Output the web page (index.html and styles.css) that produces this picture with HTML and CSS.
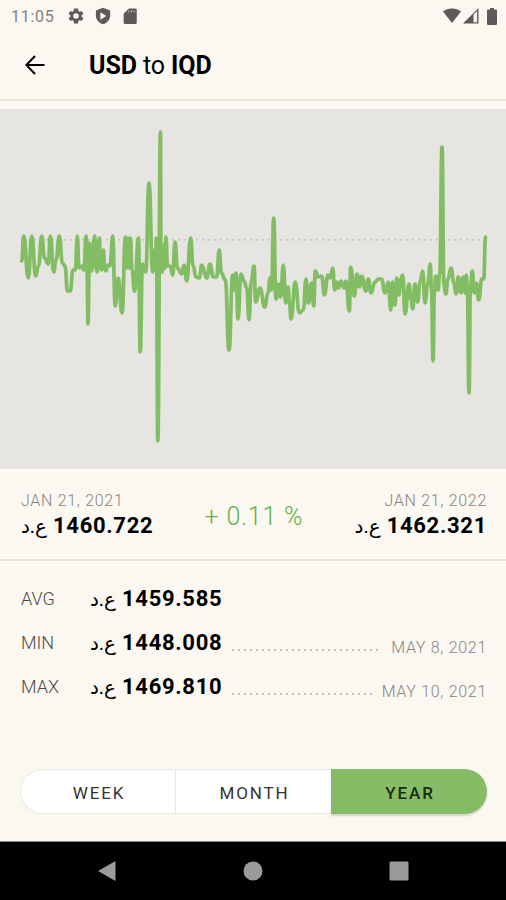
FILE: index.html
```html
<!DOCTYPE html>
<html lang="en">
<head>
    <meta charset="UTF-8">
    <meta name="viewport" content="width=device-width, initial-scale=1.0">
    <title>USD to IQD</title>
    <link rel="stylesheet" href="styles.css">
</head>
<body>
    <div class="status-bar">
        <span class="clock">11:05</span>
        <svg class="gear" width="18" height="18" viewBox="0 0 24 24"><path fill-rule="evenodd" d="M19.400 13a7.500 7.500 0 0 0 0-2l2.600-1.700-2.400-4.100-3 1.100a7.500 7.500 0 0 0-1.400-.9L14.800 2H9.200l-.4 3.400a7.500 7.500 0 0 0-1.400.9l-3-1.100L2 9.300 4.600 11a7.500 7.500 0 0 0 0 2L2 14.700l2.400 4.100 3-1.100a7.500 7.500 0 0 0 1.400.9l.4 3.400h5.600l.4-3.400a7.500 7.500 0 0 0 1.400-.9l3 1.100 2.400-4.100zM12 15.700a3.700 3.700 0 1 1 0-7.400 3.700 3.700 0 0 1 0 7.400z"/></svg>
        <svg class="shield" width="18" height="18" viewBox="0 0 24 24"><path fill-rule="evenodd" d="M12 1L2.500 4.500V11c0 6 4 10.500 9.500 12 5.500-1.500 9.500-6 9.500-12V4.500zM8.500 7L16.500 12l-8 5z"/></svg>
        <svg class="sd-card" width="18" height="18" viewBox="0 0 24 24"><path fill-rule="evenodd" d="M19 2h-8.500L3.500 9v11.500a2 2 0 0 0 2 2H19a2 2 0 0 0 2-2V4a2 2 0 0 0-2-2zM10 7h1V4.500h-1zM13.500 7h1V4.500h-1zM17 7h1V4.500h-1z"/></svg>
        <div class="signals">
            <svg width="18" height="16" viewBox="0 0 18 16"><path d="M0 3.600C5-.6 13-.6 18 3.600L9 15z"/></svg>
            <svg class="cell" width="16" height="16" viewBox="0 0 16 16"><path fill-rule="evenodd" d="M0 15.500L15.500 0v15.500zM10.500 6.500v7.700h3.600V3z"/></svg>
            <svg class="battery" width="10" height="17" viewBox="0 0 10 17"><path d="M3 0h4v1.500h2a1 1 0 0 1 1 1V16a1 1 0 0 1-1 1H1a1 1 0 0 1-1-1V2.500a1 1 0 0 1 1-1h2z"/></svg>
        </div>
    </div>
    <header>
        <svg class="back" width="20" height="20" viewBox="0 0 20 20"><path d="M19.500 10H1.500M10 1L1.300 10l8.700 9"/></svg>
        <h1>USD <span>to</span> IQD</h1>
    </header>
    <main>
        <svg class="chart" width="506" height="360" viewBox="0 109 506 360">
            <line class="baseline" x1="22" y1="239.700" x2="485" y2="239.700"/>
            <path class="rate" id="rateLine"/>
        </svg>
        <section class="range">
            <div class="point">
                <div class="date">JAN 21, 2021</div>
                <div class="price"><bdi>ع.د</bdi>1460.722</div>
            </div>
            <div class="change">+ 0.11 %</div>
            <div class="point end">
                <div class="date">JAN 21, 2022</div>
                <div class="price"><bdi>ع.د</bdi>1462.321</div>
            </div>
        </section>
        <section class="stats">
            <div class="stat">
                <span class="label">AVG</span>
                <span class="price"><bdi>ع.د</bdi>1459.585</span>
            </div>
            <div class="stat">
                <span class="label">MIN</span>
                <span class="price"><bdi>ع.د</bdi>1448.008</span>
                <span class="dots"></span>
                <span class="date">MAY 8, 2021</span>
            </div>
            <div class="stat">
                <span class="label">MAX</span>
                <span class="price"><bdi>ع.د</bdi>1469.810</span>
                <span class="dots"></span>
                <span class="date">MAY 10, 2021</span>
            </div>
        </section>
        <div class="periods">
            <button>WEEK</button>
            <button>MONTH</button>
            <button class="active">YEAR</button>
        </div>
    </main>
    <nav>
        <svg width="20" height="22" viewBox="0 0 20 22"><path d="M18.500 1v20L1 11z"/></svg>
        <svg width="20" height="20" viewBox="0 0 20 20"><circle cx="10" cy="10" r="9.500"/></svg>
        <svg width="20" height="20" viewBox="0 0 20 20"><rect x=".5" y=".5" width="19" height="19" rx="1.500"/></svg>
    </nav>
    <script>
        const points = `
            21.7,261 23.7,236 28.3,278 31.8,236 35.7,276 38.5,266 41.7,236 44.5,258 48.3,264 50.3,236
            53.7,272 56,260 59.3,236 62.5,263 65,266 67.5,291 70.2,291 73,270 75.3,270 77.3,236
            79,268 82,266 84,270 86,236 87,268 88,324 89.5,243 91.7,271 93,245 94.7,236 95.8,268 97.3,272
            99.3,238 100.3,268 101.7,270 103.5,250 104.5,268 106,271 107.5,265 110,266 112.7,236 115.2,306
            118.3,278 122,313 125.5,237 127,268 128,238 129.5,268 130.5,238 132,270 134.5,291 138.5,238
            140.2,352 142.5,264 145.7,272 149,183 152.7,272 154.5,250 155.5,270 156.3,238 157.8,441
            160.5,132 161,270 162.5,272 163.5,245 165,268 166,237 167.5,266 170,266 172.7,275 175,242 177.5,268
            181.7,274 184,265 186.7,281 190.7,238 193,265 196,277 199.3,278 201.7,265 206.7,278 210,264
            213.3,277 216.5,277 219.3,250 221.3,273 225.3,280 229,350 232.7,275 234.5,290 236,273 238,319 241,274
            244,281 246.7,288 249,320 251.3,281 254,266 255.7,302 260,288 264.7,307 268,293 270,278
            271.5,290 273.7,218 276,299 278.5,284 280.7,297 283.3,265 285.7,303 288,287 289.5,303 291,319 295.3,282
            299.3,313 303.3,310 306,279 308.3,303 311.7,283 313.7,306 315.3,271 318.3,277 321.7,276 324.3,295
            328,275 330.5,278 332.7,268 334.7,290 337,282 338.5,288 341,281 344.3,288 346,281 349.3,311
            350.7,267 354.3,296 357,274 359.7,287 361.7,276 365.7,291 368.3,279 371,293 375,282 378.5,279
            381.5,279 385,293 388.3,282 390.7,310 392.5,282 393.5,304 395,305 396.7,278 399,295 400.5,280 402.7,275 405,314
            409,284 411,299 412.7,309 415,284 417.7,302 420,282 422.7,271 425,303 427.7,284 430.3,264
            431.5,290 433,361 434.5,290 435.7,276 438,290 439.7,274 442,147 444,285 445.7,294 448,279 451,268 454,283 456,294
            458.3,277 461,293 463.3,277 465.3,293 466.3,275 467.3,292 469,393 470.5,285 472.3,271 474.3,293 476.3,283 478.7,300
            481.7,279 483.7,279 485.5,237
        `.trim().split(/\s+/).map(p => p.split(',').map(Number));

        // Smooth curve, level at every point
        let d = 'M' + points[0];
        for (let i = 1; i < points.length; i++) {
            const [x0, y0] = points[i - 1];
            const [x1, y1] = points[i];
            const mid = (x0 + x1) / 2;
            d += `C${mid},${y0} ${mid},${y1} ${x1},${y1}`;
        }
        document.getElementById('rateLine').setAttribute('d', d);
    </script>
</body>
</html>
```
FILE: styles.css
```css
* {
    box-sizing: border-box;
}
body {
    margin: 0;
    height: 900px;
    display: flex;
    flex-direction: column;
    background-color: #fbf8f1;
    color: #000;
    font-family: Roboto, "DejaVu Sans", sans-serif;
    overflow: hidden;
}
svg {
    display: block;
    flex-shrink: 0;
}
.status-bar {
    height: 32px;
    padding: 0 9px 0 11px;
    display: flex;
    align-items: center;
    fill: #5c5b59;
}
.clock {
    width: 56px;
    font-size: 16px;
    letter-spacing: 0.7px;
    color: #83817e;
}
.shield {
    margin-left: 9px;
}
.sd-card {
    margin-left: 9px;
}
.signals {
    margin-left: auto;
    display: flex;
    align-items: center;
}
.cell {
    margin-left: 2px;
}
.battery {
    margin-left: 8px;
}
header {
    height: 69px;
    padding-left: 25px;
    display: flex;
    align-items: center;
    border-bottom: 2px solid #e7e5df;
}
.back {
    margin-top: -2px;
    fill: none;
    stroke: #000;
    stroke-width: 2;
}
h1 {
    margin: 0 0 0 44px;
    font-size: 25px;
    font-weight: 700;
    letter-spacing: -0.1px;
}
h1 span {
    font-weight: 400;
}
main {
    flex: 1;
    padding-top: 8px;
    border-bottom: 1px solid #888;
}
.chart {
    background-color: #e6e5e1;
}
.baseline {
    stroke: #c8c7c4;
    stroke-width: 2;
    stroke-dasharray: 2 4;
}
.rate {
    fill: none;
    stroke: #82bd63;
    stroke-width: 3.7;
    stroke-linejoin: round;
    stroke-linecap: round;
}
.range {
    height: 92px;
    padding: 22px 19px 0 21px;
    display: flex;
    justify-content: space-between;
    border-bottom: 2px solid #e7e5df;
}
.date {
    font-size: 16px;
    font-weight: 300;
    line-height: 20px;
    letter-spacing: 0.7px;
    color: #878581;
}
.price {
    font-size: 22px;
    font-weight: 700;
    line-height: 30px;
    letter-spacing: 0.7px;
    white-space: nowrap;
}
.price bdi {
    display: inline-block;
    width: 26px;
    margin-right: 6px;
    font-size: 20px;
    font-weight: 400;
    line-height: 20px;
    letter-spacing: 0;
}
.end {
    text-align: right;
}
.change {
    padding-top: 10px;
    font-size: 25px;
    font-weight: 300;
    line-height: 32px;
    letter-spacing: 0.8px;
    color: #5fb13f;
}
.stats {
    padding: 16px 19px 0 21px;
}
.stat {
    height: 44px;
    display: flex;
    align-items: center;
}
.label {
    width: 69px;
    margin-top: -1px;
    font-size: 18px;
    font-weight: 300;
    color: #4c4b49;
}
.dots {
    flex: 1;
    height: 2px;
    margin: 14px 10px 0;
    background: repeating-linear-gradient(to right, #c3c0bb 0 2px, transparent 2px 6px);
}
.stat .date {
    margin-top: 9px;
}
.periods {
    height: 45px;
    margin: 60px 19px 0 20px;
    display: grid;
    grid-template-columns: 155px 156px 156px;
}
button {
    padding: 2px 0 0 2px;
    border: 1.5px solid #e9e7e2;
    border-right: none;
    background-color: #fff;
    color: #333;
    font-family: Roboto, sans-serif;
    font-size: 17px;
    letter-spacing: 1.9px;
}
button:first-child {
    border-radius: 23px 0 0 23px;
}
button.active {
    border: none;
    border-radius: 0 23px 23px 0;
    background-color: #87bb66;
    color: #182d0e;
    font-weight: 500;
    box-shadow: 0 2px 2px rgba(0, 0, 0, 0.15);
}
nav {
    height: 58px;
    padding: 0 97px;
    display: flex;
    align-items: center;
    justify-content: space-between;
    background-color: #000;
    fill: #9b9b9b;
}
```
